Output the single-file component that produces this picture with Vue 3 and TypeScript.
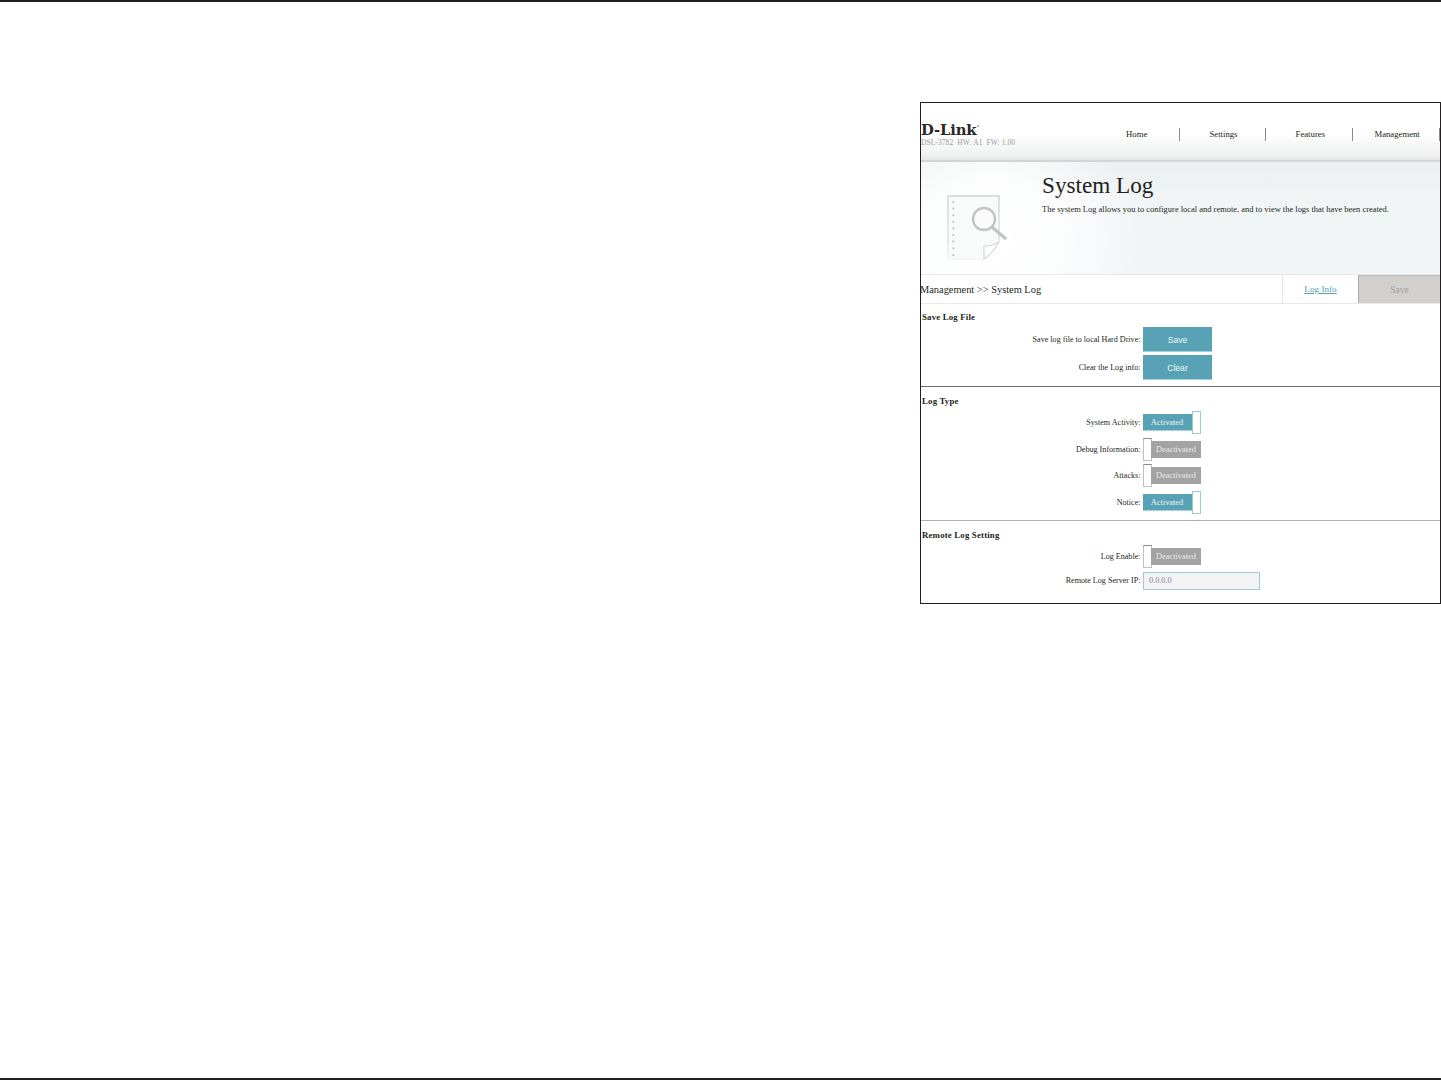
<script setup lang="ts">
interface Toggle { label: string; on: boolean }
const navItems: string[] = ['Home', 'Settings', 'Features', 'Management']
const logTypes: Toggle[] = [
  { label: 'System Activity:', on: true },
  { label: 'Debug Information:', on: false },
  { label: 'Attacks:', on: false },
  { label: 'Notice:', on: true },
]
const dots: number[] = [7, 13.6, 20.2, 26.8, 33.4, 40, 46.6, 53.2, 60]
</script>

<template>
  <div class="page">
    <div class="topbar"></div>
    <main class="main">
      <div class="frame">
        <header class="head">
          <div class="brand">
            <div class="logo">D-Link<span class="reg">®</span></div>
            <div class="model">DSL-3782&nbsp; HW: A1&nbsp; FW: 1.00</div>
          </div>
          <nav class="nav">
            <div v-for="item in navItems" :key="item" class="nav-item">{{ item }}</div>
          </nav>
        </header>
        <section class="banner">
          <div class="art">
            <svg width="62" height="70" viewBox="0 0 62 70" fill="none">
              <defs>
                <linearGradient id="fade" x1="0" y1="0" x2="0" y2="1">
                  <stop offset="0" stop-color="#d2d4d4" />
                  <stop offset="0.65" stop-color="#dcdede" />
                  <stop offset="1" stop-color="#f4f6f6" />
                </linearGradient>
              </defs>
              <path d="M1 1H52V47L36 64H1Z" fill="#f9fafa" stroke="url(#fade)" stroke-width="1.4" />
              <path d="M37 64V51C43 51 48 50 52 47C49 53 43 60 37 64Z" fill="#fff" stroke="#d4d6d6" stroke-width="1.2" />
              <circle v-for="y in dots" :key="y" cx="6.3" :cy="y" r="1" fill="#b8bcbc" />
              <circle cx="37" cy="24" r="11" stroke="#c2c4c4" stroke-width="2.4" fill="#fbfcfc" fill-opacity=".6" />
              <path d="M45 32L59 44" stroke="#c2c4c4" stroke-width="3" />
            </svg>
          </div>
          <div class="banner-text">
            <h1 class="title">System Log</h1>
            <p class="desc">The system Log allows you to configure local and remote, and to view the logs that have been created.</p>
          </div>
        </section>
        <div class="crumbs">
          <div class="crumb">Management &gt;&gt; System Log</div>
          <a class="tab">Log Info</a>
          <div class="save-tab">Save</div>
        </div>

        <section class="sec sec-file">
          <h2 class="sec-title">Save Log File</h2>
          <div class="row row-btn">
            <span class="label">Save log file to local Hard Drive:</span>
            <button class="btn">Save</button>
          </div>
          <div class="row row-btn">
            <span class="label">Clear the Log info:</span>
            <button class="btn">Clear</button>
          </div>
        </section>

        <section class="sec sec-type">
          <h2 class="sec-title">Log Type</h2>
          <div v-for="t in logTypes" :key="t.label" class="row row-toggle">
            <span class="label">{{ t.label }}</span>
            <div class="toggle" :class="t.on ? 'on' : 'off'">
              <span class="bar">{{ t.on ? 'Activated' : 'Deactivated' }}</span>
              <span class="knob"></span>
            </div>
          </div>
        </section>

        <section class="sec sec-remote">
          <h2 class="sec-title">Remote Log Setting</h2>
          <div class="row row-toggle">
            <span class="label">Log Enable:</span>
            <div class="toggle off">
              <span class="bar">Deactivated</span>
              <span class="knob"></span>
            </div>
          </div>
          <div class="row row-ip">
            <span class="label">Remote Log Server IP:</span>
            <div class="ip">0.0.0.0</div>
          </div>
        </section>
      </div>
    </main>
    <div class="botbar"></div>
  </div>
</template>

<style>
html, body { margin: 0; background: #fff; }
</style>

<style scoped>
.page {
  height: 1080px;
  display: flex;
  flex-direction: column;
  font-family: "Liberation Serif", serif;
  color: #231f20;
  overflow: hidden;
}
.topbar { height: 2px; background: #231f20; flex: none; }
.botbar { height: 2px; background: #231f20; flex: none; }
.main { flex: 1; padding: 100px 0 0 920px; }
.frame {
  width: 521px;
  height: 502px;
  box-sizing: border-box;
  border: 1px solid #231f20;
  display: flex;
  flex-direction: column;
}
.head {
  height: 57px;
  flex: none;
  display: flex;
  background: linear-gradient(#fff 0, #fff 50%, #f0f1f1 92%, #e6e8e8 100%);
  border-bottom: 2px solid #d3d5d5;
  box-sizing: content-box;
}
.brand { width: 172px; padding-top: 16px; }
.logo {
  font-family: "DejaVu Serif", serif;
  font-weight: 700;
  font-size: 14.8px;
  line-height: 15px;
  letter-spacing: -0.15px;
  color: #2a2627;
}
.reg { font-size: 3px; vertical-align: 8px; font-weight: 400; }
.model { font-size: 7.35px; line-height: 8px; color: #9a9a9a; margin-top: 2px; letter-spacing: .15px; white-space: nowrap; }
.nav { flex: 1; display: flex; padding-top: 25px; align-items: flex-start; }
.nav-item {
  height: 13px;
  line-height: 13px;
  font-size: 8.7px;
  width: 86.8px;
  padding-left: 2px;
  text-align: center;
  border-right: 1px solid #8a8a8a;
  color: #231f20;
  box-sizing: border-box;
  flex: none;
}
.banner {
  height: 112px;
  flex: none;
  display: flex;
  background:
    radial-gradient(ellipse 150px 140px at 70px 80px, #fff 0, rgba(255,255,255,.85) 45%, rgba(255,255,255,0) 100%),
    linear-gradient(#ebeff0 0, #f1f5f6 35%, #f1f5f7 100%);
  border-bottom: 1px solid #e6e8e8;
}
.art { width: 121px; flex: none; padding: 33px 0 0 26px; box-sizing: border-box; }
.banner-text { flex: 1; padding-top: 9px; }
.title { margin: 0; font-size: 23.2px; line-height: 28px; font-weight: 400; color: #231f20; }
.desc { margin: 5px 0 0; font-size: 8.46px; line-height: 11px; color: #231f20; white-space: nowrap; }
.crumbs {
  height: 28px;
  flex: none;
  display: flex;
  border-bottom: 1px solid #e8e8e8;
  box-sizing: content-box;
}
.crumb { flex: 1; font-size: 10.4px; line-height: 29px; white-space: nowrap; color: #231f20; margin-left: -1px; }
.tab {
  width: 76px;
  box-sizing: border-box;
  flex: none;
  text-align: center;
  font-size: 9.2px;
  line-height: 29px;
  color: #55a2b5;
  text-decoration: underline;
  border-left: 1px solid #e6e6e6;
}
.save-tab {
  width: 82px;
  box-sizing: border-box;
  flex: none;
  text-align: center;
  font-size: 9.5px;
  line-height: 29px;
  color: #9d9d9d;
  background: #d1d0ce;
  border-left: 1px solid #aaa;
  border-top: 1px solid #bbb;
}
.sec { box-sizing: border-box; flex: none; }
.sec-title {
  margin: 0;
  padding-left: 1px;
  font-size: 8.8px;
  line-height: 10px;
  font-weight: 700;
  letter-spacing: .18px;
  color: #231f20;
}
.sec-file { height: 83px; padding-top: 8px; border-bottom: 1px solid #6b6b6b; }
.sec-type { height: 134px; padding-top: 9px; border-bottom: 1px solid #b0b0b0; }
.sec-remote { flex: 1; padding-top: 9px; }
.row { display: flex; align-items: center; }
.label {
  width: 219.5px;
  flex: none;
  text-align: right;
  font-size: 8.1px;
  line-height: 10px;
  padding-top: 1px;
  color: #231f20;
  white-space: nowrap;
  margin-right: 2.5px;
}
.row-btn { height: 28px; }
.sec-file .sec-title { margin-bottom: 3.5px; }
.btn {
  width: 69px;
  height: 25px;
  border: 0;
  border-bottom: 1px solid #a5cfd9;
  padding: 1px 0 0;
  background: #57a2b5;
  color: #f1f7f9;
  font-family: "Liberation Sans", sans-serif;
  font-size: 8.6px;
}
.row-toggle { height: 26.67px; }
.sec-type .sec-title { margin-bottom: 3.2px; }
.toggle { display: flex; align-items: center; width: 58px; height: 23px; flex: none; }
.bar {
  width: 50px;
  height: 17px;
  box-sizing: border-box;
  text-align: center;
  font-size: 8.4px;
  line-height: 18px;
  color: #f2f2f2;
  flex: none;
}
.knob {
  width: 9px;
  height: 23px;
  box-sizing: border-box;
  background: #fff;
  flex: none;
}
.on .bar { background: #57a2b5; border-bottom: 1px solid #a5cfd9; padding-right: 2px; }
.on .knob { border: 1px solid #9ccad6; margin-left: -1px; }
.off { flex-direction: row-reverse; }
.off .bar { background: #a3a3a3; color: #e9e9e9; }
.off .knob { border: 1px solid #c0c0c0; border-top-color: #8a8a8a; margin-right: -1px; }
.sec-remote .sec-title { margin-bottom: 3px; }
.row-ip { height: 18px; margin-top: 2px; }
.ip {
  width: 117px;
  height: 18px;
  box-sizing: border-box;
  border: 1px solid #9ccad6;
  background: #f3f3f3;
  font-size: 8.2px;
  font-weight: 400;
  line-height: 16px;
  padding-left: 5px;
  color: #7f8296;
}
</style>
